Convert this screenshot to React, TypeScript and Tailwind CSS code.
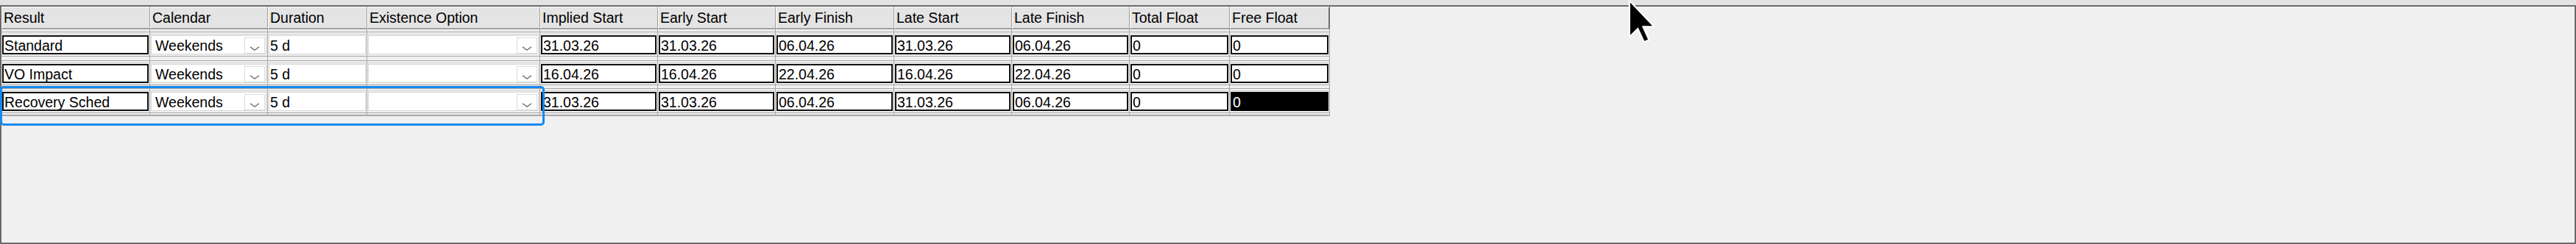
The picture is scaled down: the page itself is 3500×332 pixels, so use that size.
import React from "react";

type Col = { name: string; wc: string; type: "text" | "combo" | "plain" };

const cols: Col[] = [
  { name: "Result", wc: "w-[202px]", type: "text" },
  { name: "Calendar", wc: "w-[160px]", type: "combo" },
  { name: "Duration", wc: "w-[135px]", type: "plain" },
  { name: "Existence Option", wc: "w-[235px]", type: "combo" },
  { name: "Implied Start", wc: "w-[160px]", type: "text" },
  { name: "Early Start", wc: "w-[160px]", type: "text" },
  { name: "Early Finish", wc: "w-[161px]", type: "text" },
  { name: "Late Start", wc: "w-[160px]", type: "text" },
  { name: "Late Finish", wc: "w-[160px]", type: "text" },
  { name: "Total Float", wc: "w-[136px]", type: "text" },
  { name: "Free Float", wc: "w-[136px]", type: "text" },
];

const rows: string[][] = [
  ["Standard", "Weekends", "5 d", "", "31.03.26", "31.03.26", "06.04.26", "31.03.26", "06.04.26", "0", "0"],
  ["VO Impact", "Weekends", "5 d", "", "16.04.26", "16.04.26", "22.04.26", "16.04.26", "22.04.26", "0", "0"],
  ["Recovery Sched", "Weekends", "5 d", "", "31.03.26", "31.03.26", "06.04.26", "31.03.26", "06.04.26", "0", "0"],
];

const rowH = ["h-[39px]", "h-[38px]", "h-[39px]"];

function Chevron() {
  return (
    <svg width="14" height="6" viewBox="0 0 14 6" className="block">
      <path d="M1 0.8 L7 5.2 L13 0.8" fill="none" stroke="#6a6a6a" strokeWidth="1.4" />
    </svg>
  );
}

function Box({ type, value, selected }: { type: Col["type"]; value: string; selected: boolean }) {
  if (type === "combo") {
    return (
      <div className="h-[26px] ml-px mr-px bg-white border border-[#d6d6d6] flex">
        <div className="flex-1 pl-[5px] pt-[2px] leading-[22px] whitespace-nowrap overflow-hidden text-black">
          {value}
        </div>
        <div className="w-[28px] h-[22px] mt-[2px] mr-px bg-white border border-[#dcdcdc] flex flex-col items-center justify-end pb-[3px]">
          <Chevron />
        </div>
      </div>
    );
  }
  if (type === "plain") {
    return (
      <div className="h-[26px] ml-px mr-px bg-white border border-[#d8d8d8] pl-px pt-[2px] leading-[22px] whitespace-nowrap text-black">
        {value}
      </div>
    );
  }
  return (
    <div
      className={
        selected
          ? "h-[26px] ml-px mr-px bg-black border-2 border-black pl-px pt-px leading-[22px] whitespace-nowrap text-white"
          : "h-[26px] ml-px mr-px bg-white border-2 border-[#111111] pl-px pt-px leading-[22px] whitespace-nowrap text-black"
      }
    >
      {value}
    </div>
  );
}

export default function App() {
  return (
    <div
      className="relative w-[3500px] h-[332px] bg-[#e3e3e3] pt-[7px] overflow-hidden text-[19.5px]"
      style={{ fontFamily: '"Liberation Sans", Arial, sans-serif' }}
    >
      <div className="h-[325px] border-2 border-[#6a6a6a] bg-[#f0f0f0]">
        <div className="h-full border-r border-b border-[#fafafa]">
          {/* header */}
          <div className="flex">
            {cols.map((c, i) => (
              <div
                key={c.name}
                className={`${c.wc} h-[31px] shrink-0 bg-[#e4e4e4] border-t border-l border-white border-b-2 border-b-[#a3a3a3] pl-[2px] pt-[3px] leading-[22px] whitespace-nowrap text-black ${
                  i === cols.length - 1 ? "border-r-2 border-r-[#707070]" : "border-r border-r-[#9c9c9c]"
                }`}
              >
                {c.name}
              </div>
            ))}
          </div>
          {/* rows */}
          {rows.map((r, ri) => (
            <div key={ri} className="flex">
              {cols.map((c, ci) => (
                <div key={ci} className={`${c.wc} ${rowH[ri]} shrink-0 flex flex-col border-r border-[#a6a6a6]`}>
                  <div className="h-[3px]" />
                  <div className="h-px bg-[#a8a8a8]" />
                  <div className="h-[2px]" />
                  <div className="h-px bg-[#d4d4d4]" />
                  <div className="h-px" />
                  <Box type={c.type} value={r[ci]} selected={ri === 2 && ci === 10} />
                  <div className="h-[2px]" />
                  <div className="h-px bg-[#a8a8a8]" />
                </div>
              ))}
            </div>
          ))}
          <div className="w-[1805px] h-[2px] border-b-2 border-[#a8a8a8]" />
        </div>
      </div>

      {/* focus rectangle */}
      <div className="absolute left-0 top-[117px] w-[740px] h-[54px] border-[3px] border-[#1589f0] rounded-[5px]" />

      {/* mouse cursor */}
      <svg className="absolute left-[2212px] top-[-1px]" width="38" height="60" viewBox="-0.6 -0.6 12.6 20">
        <path
          d="M0 0 L0 16.5 L3.8 12.8 L6.6 18.8 L8.9 17.8 L6.2 11.9 L11.3 11.9 Z"
          fill="#000"
          stroke="#fff"
          strokeWidth="0.75"
          strokeLinejoin="miter"
        />
      </svg>
    </div>
  );
}
